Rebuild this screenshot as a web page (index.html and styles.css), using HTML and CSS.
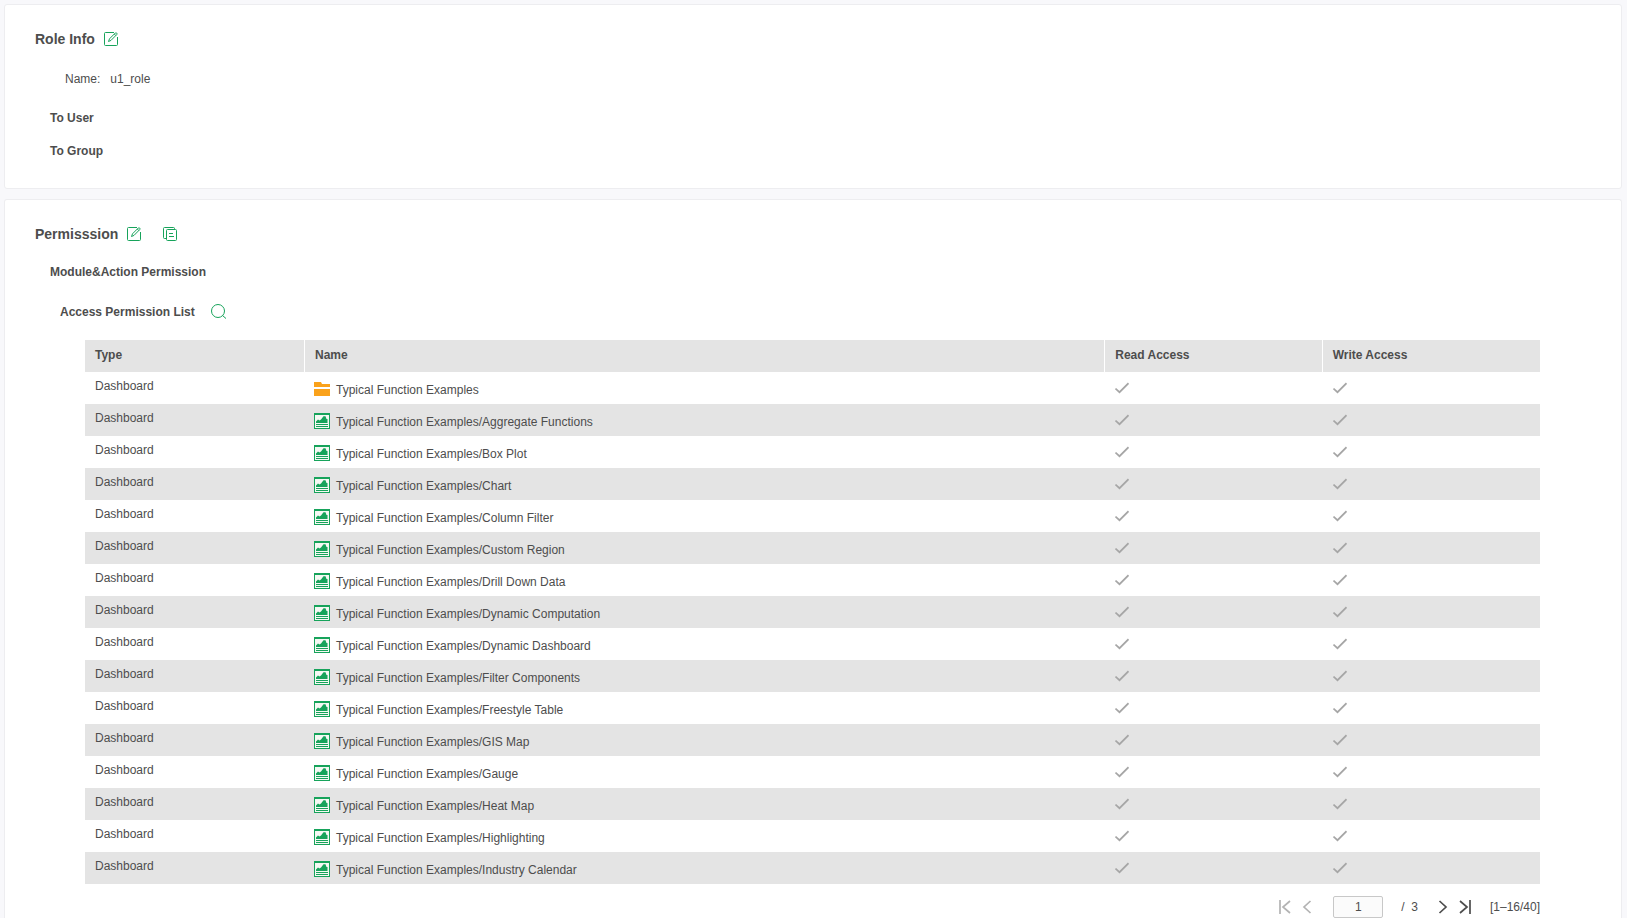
FILE: index.html
```html
<!DOCTYPE html>
<html lang="en">
<head>
<meta charset="utf-8">
<title>Role Info</title>
<link rel="stylesheet" href="styles.css">
</head>
<body>
<svg class="sprite" aria-hidden="true">
  <symbol id="edit" viewBox="0 0 14 14"><path d="M10 .5H1.500Q.5.5.5 1.500V12.500Q.5 13.500 1.500 13.500H12.500Q13.500 13.500 13.500 12.500V5M4.500 9.500L5.500 6.800 11.300 1Q12 .4 12.700 1.100 13.400 1.800 12.800 2.500L7 8.400 4.500 9.500ZM10.300 2L11.800 3.500" fill="none" stroke="currentColor"/></symbol>
  <symbol id="copy" viewBox="0 0 14 14"><path d="M3.500 11.500H1.500Q.5 11.500.5 10.500V1.500Q.5.5 1.500.5H10.500Q11.500.5 11.500 1.500V2.500M4.500 2.500H12.500Q13.500 2.500 13.500 3.500V12.500Q13.500 13.500 12.500 13.500H4.500Q3.500 13.500 3.500 12.500V3.500Q3.500 2.500 4.500 2.500ZM6 6.500H10M6 9.500H11" fill="none" stroke="currentColor"/></symbol>
  <symbol id="search" viewBox="0 0 16 16"><path d="M7 .5A6.500 6.500 0 1 1 7 13.500A6.500 6.500 0 1 1 7 .5ZM11.500 11.500L15 14.500" fill="none" stroke="currentColor"/></symbol>
  <symbol id="folder" viewBox="0 0 16 16"><path d="M0 1H7L8 3H16V6H0ZM0 8H16V15H0Z" fill="#faa21b"/></symbol>
  <symbol id="dash" viewBox="0 0 16 16"><path d="M1 1H15V15H1Z" fill="#f6f8f4"/><path d="M0 0H16V16H0ZM1 2V15H15V2Z" fill="#17a35b" fill-rule="evenodd"/><path d="M2 10V8.500L4 6.500L5.500 7.500L7 6.500L9.500 3.200H11.500L12.500 6H13.500V10ZM2 11H14V12H2ZM2 13H14V14H2Z" fill="#17a35b"/></symbol>
  <symbol id="check" viewBox="0 0 14 12"><path d="M.5 6.500L4.500 10.200 13.500 1.200" fill="none" stroke="#a6a6a6" stroke-width="1.700"/></symbol>
  <symbol id="prev" viewBox="0 0 12 14"><path d="M9.500 1L3 7L9.500 13" fill="none" stroke="currentColor" stroke-width="1.700"/></symbol>
  <symbol id="first" viewBox="0 0 12 14"><path d="M1 0V14M11 1L4 7L11 13" fill="none" stroke="currentColor" stroke-width="1.700"/></symbol>
</svg>
<main class="page">
  <section class="card role">
    <header class="card-head"><h1 class="title">Role Info</h1><button class="tool" aria-label="Edit role"><svg class="icon"><use href="#edit"/></svg></button></header>
    <dl class="field"><dt>Name:</dt><dd>u1_role</dd></dl>
    <h2 class="subtitle">To User</h2>
    <h2 class="subtitle">To Group</h2>
  </section>
  <section class="card permission">
    <header class="card-head"><h1 class="title">Permisssion</h1><button class="tool" aria-label="Edit permission"><svg class="icon"><use href="#edit"/></svg></button><button class="tool tool-copy" aria-label="Copy permission"><svg class="icon"><use href="#copy"/></svg></button></header>
    <h2 class="subtitle">Module&amp;Action Permission</h2>
    <div class="list-head"><h3 class="list-title">Access Permission List</h3><button class="tool" aria-label="Search"><svg class="icon icon-lg"><use href="#search"/></svg></button></div>
    <div class="list">
      <table class="grid">
        <thead><tr><th class="type">Type</th><th class="name">Name</th><th>Read Access</th><th>Write Access</th></tr></thead>
        <tbody>
          <tr><td>Dashboard</td><td><span class="item"><svg class="icon-lg"><use href="#folder"/></svg>Typical Function Examples</span></td><td><svg class="check"><use href="#check"/></svg></td><td><svg class="check"><use href="#check"/></svg></td></tr>
          <tr><td>Dashboard</td><td><span class="item"><svg class="icon-lg"><use href="#dash"/></svg>Typical Function Examples/Aggregate Functions</span></td><td><svg class="check"><use href="#check"/></svg></td><td><svg class="check"><use href="#check"/></svg></td></tr>
          <tr><td>Dashboard</td><td><span class="item"><svg class="icon-lg"><use href="#dash"/></svg>Typical Function Examples/Box Plot</span></td><td><svg class="check"><use href="#check"/></svg></td><td><svg class="check"><use href="#check"/></svg></td></tr>
          <tr><td>Dashboard</td><td><span class="item"><svg class="icon-lg"><use href="#dash"/></svg>Typical Function Examples/Chart</span></td><td><svg class="check"><use href="#check"/></svg></td><td><svg class="check"><use href="#check"/></svg></td></tr>
          <tr><td>Dashboard</td><td><span class="item"><svg class="icon-lg"><use href="#dash"/></svg>Typical Function Examples/Column Filter</span></td><td><svg class="check"><use href="#check"/></svg></td><td><svg class="check"><use href="#check"/></svg></td></tr>
          <tr><td>Dashboard</td><td><span class="item"><svg class="icon-lg"><use href="#dash"/></svg>Typical Function Examples/Custom Region</span></td><td><svg class="check"><use href="#check"/></svg></td><td><svg class="check"><use href="#check"/></svg></td></tr>
          <tr><td>Dashboard</td><td><span class="item"><svg class="icon-lg"><use href="#dash"/></svg>Typical Function Examples/Drill Down Data</span></td><td><svg class="check"><use href="#check"/></svg></td><td><svg class="check"><use href="#check"/></svg></td></tr>
          <tr><td>Dashboard</td><td><span class="item"><svg class="icon-lg"><use href="#dash"/></svg>Typical Function Examples/Dynamic Computation</span></td><td><svg class="check"><use href="#check"/></svg></td><td><svg class="check"><use href="#check"/></svg></td></tr>
          <tr><td>Dashboard</td><td><span class="item"><svg class="icon-lg"><use href="#dash"/></svg>Typical Function Examples/Dynamic Dashboard</span></td><td><svg class="check"><use href="#check"/></svg></td><td><svg class="check"><use href="#check"/></svg></td></tr>
          <tr><td>Dashboard</td><td><span class="item"><svg class="icon-lg"><use href="#dash"/></svg>Typical Function Examples/Filter Components</span></td><td><svg class="check"><use href="#check"/></svg></td><td><svg class="check"><use href="#check"/></svg></td></tr>
          <tr><td>Dashboard</td><td><span class="item"><svg class="icon-lg"><use href="#dash"/></svg>Typical Function Examples/Freestyle Table</span></td><td><svg class="check"><use href="#check"/></svg></td><td><svg class="check"><use href="#check"/></svg></td></tr>
          <tr><td>Dashboard</td><td><span class="item"><svg class="icon-lg"><use href="#dash"/></svg>Typical Function Examples/GIS Map</span></td><td><svg class="check"><use href="#check"/></svg></td><td><svg class="check"><use href="#check"/></svg></td></tr>
          <tr><td>Dashboard</td><td><span class="item"><svg class="icon-lg"><use href="#dash"/></svg>Typical Function Examples/Gauge</span></td><td><svg class="check"><use href="#check"/></svg></td><td><svg class="check"><use href="#check"/></svg></td></tr>
          <tr><td>Dashboard</td><td><span class="item"><svg class="icon-lg"><use href="#dash"/></svg>Typical Function Examples/Heat Map</span></td><td><svg class="check"><use href="#check"/></svg></td><td><svg class="check"><use href="#check"/></svg></td></tr>
          <tr><td>Dashboard</td><td><span class="item"><svg class="icon-lg"><use href="#dash"/></svg>Typical Function Examples/Highlighting</span></td><td><svg class="check"><use href="#check"/></svg></td><td><svg class="check"><use href="#check"/></svg></td></tr>
          <tr><td>Dashboard</td><td><span class="item"><svg class="icon-lg"><use href="#dash"/></svg>Typical Function Examples/Industry Calendar</span></td><td><svg class="check"><use href="#check"/></svg></td><td><svg class="check"><use href="#check"/></svg></td></tr>
        </tbody>
      </table>
      <nav class="pager" aria-label="Pages">
        <button class="arrow" aria-label="First page" disabled><svg class="arrow-icon"><use href="#first"/></svg></button>
        <button class="arrow" aria-label="Previous page" disabled><svg class="arrow-icon"><use href="#prev"/></svg></button>
        <input class="page-no" type="text" value="1" aria-label="Page number">
        <span class="total">/&nbsp; 3</span>
        <button class="arrow" aria-label="Next page"><svg class="arrow-icon flip"><use href="#prev"/></svg></button>
        <button class="arrow" aria-label="Last page"><svg class="arrow-icon flip"><use href="#first"/></svg></button>
        <span class="range">[1–16/40]</span>
      </nav>
    </div>
  </section>
</main>
</body>
</html>
```
FILE: styles.css
```css
* { box-sizing: border-box; }
body {
  margin: 0;
  background: #f8f8fb;
  color: #4d4d4d;
  font: 12px/16px "Liberation Sans", Arial, sans-serif;
}
h1, h2, h3, dl, dd { margin: 0; }
button { padding: 0; border: 0; background: none; color: inherit; cursor: pointer; }
svg { display: block; flex: none; }
.sprite { position: absolute; width: 0; height: 0; }
.page {
  display: flex;
  flex-direction: column;
  gap: 10px;
  min-height: 100vh;
  padding: 4px 5px 0 4px;
}
.card {
  padding: 24px 30px;
  border: 1px solid #ededf0;
  border-radius: 3px;
  background: #fff;
}
.role { padding-bottom: 12px; }
.permission {
  flex: 1;
  padding-bottom: 0;
  border-bottom: 0;
  border-radius: 3px 3px 0 0;
}
.card-head { display: flex; align-items: center; gap: 9px; height: 20px; }
.title { font-size: 14px; line-height: 20px; }
.tool { color: #17a35b; }
.tool-copy { margin-left: 13px; }
.icon { width: 14px; height: 14px; }
.icon-lg { width: 16px; height: 16px; }
.field { display: flex; gap: 10px; margin: 22px 0 23px 30px; }
.subtitle { margin: 0 0 17px 15px; font-size: 12px; line-height: 16px; }
.permission .subtitle { margin-top: 20px; margin-bottom: 22px; }
.list-head { display: flex; align-items: center; gap: 16px; margin-left: 25px; height: 20px; }
.list-title { font-size: 12px; }
.list { margin: 18px 51px 0 50px; }
.grid { width: 100%; border-collapse: separate; border-spacing: 0; table-layout: fixed; }
.grid th {
  height: 32px;
  padding: 0 10px 2px;
  background: #e4e4e4;
  text-align: left;
  border-right: 1px solid #fff;
}
.grid th:last-child { border-right: 0; }
.type { width: 220px; }
.name { width: 55%; }
.grid td { height: 32px; padding: 6px 10px 0; vertical-align: top; }
.grid td:nth-child(2) { padding-top: 9px; padding-left: 9px; }
.grid td:nth-child(n+3) { padding-top: 10px; }
.grid tbody tr:nth-child(even) { background: #e4e4e4; }
.item { display: flex; gap: 6px; line-height: 18px; }
.check { width: 14px; height: 12px; }
.pager { display: flex; justify-content: flex-end; align-items: center; padding-top: 12px; }
.arrow { margin-left: 10px; }
.arrow:disabled { color: #b3b3b3; }
.arrow-icon { width: 12px; height: 14px; }
.flip { transform: scaleX(-1); }
.page-no {
  width: 50px;
  height: 22px;
  margin: 0 18px 0 20px;
  padding: 0;
  border: 1px solid #c8c8c8;
  border-radius: 2px;
  background: #fbfbfb;
  color: inherit;
  font: inherit;
  text-align: center;
}
.total { margin-right: 9px; }
.range { margin-left: 19px; }
```
